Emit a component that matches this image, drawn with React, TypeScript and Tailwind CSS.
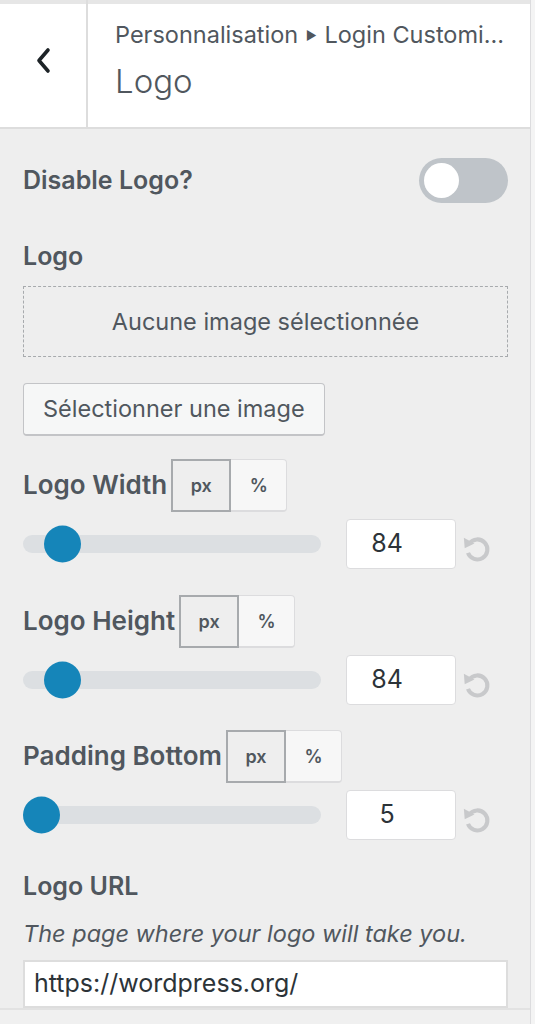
import React from "react";

const font = "font-['Inter','Noto_Sans',sans-serif]";

function UnitToggle() {
  return (
    <div className="flex h-[53px] ml-[4px]">
      <div className="w-[60px] h-full flex items-center justify-center bg-[#eeeeee] border-2 border-[#a7aaad] text-[18px] font-semibold text-[#50575e]">
        px
      </div>
      <div className="w-[56px] h-full flex items-center justify-center bg-[#f7f7f7] border border-[#dcdcde] border-l-0 border-b-2 rounded-r-[4px] text-[18px] font-semibold text-[#50575e]">
        %
      </div>
    </div>
  );
}

function ResetIcon() {
  return (
    <svg width="28" height="28" viewBox="1.8 3.2 19.6 19.6" fill="none" className="ml-[7px] mt-[12px]">
      <path d="M6.2 8.5A7 7 0 1 1 5.3 15" stroke="#c8c9cb" strokeWidth="2.9" strokeLinecap="butt" />
      <path d="M2.4 4.4 L9.8 8.4 L3.0 11.8 Z" fill="#c8c9cb" />
    </svg>
  );
}

function SliderRow({ pct, value }: { pct: number; value: string }) {
  return (
    <div className="flex items-center mt-[7px] h-[50px]">
      <div className="relative w-[298px] h-[18px] rounded-full bg-[#dcdfe2]">
        <div
          className="absolute top-1/2 -translate-y-1/2 w-[37px] h-[37px] rounded-full bg-[#1585b9]"
          style={{ left: `${pct}px` }}
        />
      </div>
      <div className="ml-[25px] w-[110px] h-[50px] bg-white border border-[#dcdcde] rounded-[4px] flex items-center justify-center pr-[28px] text-[25px] text-[#2c3338]">
        {value}
      </div>
      <ResetIcon />
    </div>
  );
}

function UnitControl({ label, pct, value, top }: { label: string; pct: number; value: string; top: string }) {
  return (
    <div className={top}>
      <div className="flex items-center">
        <span className="text-[26px] font-semibold text-[#50575e] leading-none pb-[2px]">{label}</span>
        <UnitToggle />
      </div>
      <SliderRow pct={pct} value={value} />
    </div>
  );
}

export default function App() {
  return (
    <div className={`w-[535px] h-[1024px] bg-[#f4f4f4] overflow-hidden ${font}`}>
      <div className="w-[531px] h-full bg-[#eeeeee] border-r border-[#dcdcde] flex flex-col">
        {/* header */}
        <div className="h-[4px] bg-[#e6e6e6] flex">
          <div className="w-[88px] border-r-2 border-[#dddddd]" />
        </div>
        <div className="h-[126px] bg-white border-b-2 border-[#dddddd] flex">
          <div className="w-[88px] border-r-2 border-[#dddddd] flex justify-center pt-[43px]">
            <svg width="18" height="28" viewBox="0 0 18 28">
              <path d="M14 3 L5 13.5 L14 24" stroke="#1d2327" strokeWidth="3.6" fill="none" strokeLinecap="round" strokeLinejoin="round" />
            </svg>
          </div>
          <div className="flex-1 pl-[27px] pt-[13px]">
            <div className="text-[23.5px] text-[#50575e] leading-[36px] whitespace-nowrap">
              Personnalisation <span className="text-[12px] relative -top-[3px] mx-[1px]">▶</span> Login Customi...
            </div>
            <div className="text-[33px] font-light text-[#50575e] leading-[44px] mt-[2px]">Logo</div>
          </div>
        </div>

        {/* body */}
        <div className="pl-[23px] pr-[22px] flex-1 flex flex-col">
          <div className="flex items-center justify-between mt-[29px]">
            <span className="text-[25px] font-semibold text-[#50575e]">Disable Logo?</span>
            <div className="w-[89px] h-[45px] rounded-full bg-[#bfc4c9] flex items-center pl-[5px]">
              <div className="w-[35px] h-[35px] rounded-full bg-white" />
            </div>
          </div>

          <div className="mt-[38px] text-[25px] font-semibold text-[#50575e] leading-[30px]">Logo</div>
          <div className="mt-[15px] h-[71px] border border-dashed border-[#a7aaad] flex items-center justify-center text-[23.5px] text-[#50575e]">
            Aucune image sélectionnée
          </div>
          <div className="mt-[26px]">
            <div className="inline-flex items-center h-[53px] px-[19px] bg-[#f6f7f7] border border-[#c3c4c7] border-b-2 rounded-[4px] text-[23.5px] text-[#50575e]">
              Sélectionner une image
            </div>
          </div>

          <UnitControl top="mt-[23px]" label="Logo Width" pct={21} value="84" />
          <UnitControl top="mt-[26px]" label="Logo Height" pct={21} value="84" />
          <UnitControl top="mt-[25px]" label="Padding Bottom" pct={0} value="5" />

          <div className="mt-[31px] text-[25px] font-semibold text-[#50575e] leading-[30px]">Logo URL</div>
          <div className="mt-[18px] text-[23.5px] italic text-[#50575e] leading-[30px]">
            The page where your logo will take you.
          </div>
          <div className="mt-[11px] h-[48px] bg-white border-2 border-[#dddddd] flex items-center pl-[9px] text-[25px] text-[#2c3338]">
            https://wordpress.org/
          </div>
        </div>
        <div className="h-[16px] bg-[#f0f0f0] border-t-2 border-[#e2e2e2]" />
      </div>
    </div>
  );
}
